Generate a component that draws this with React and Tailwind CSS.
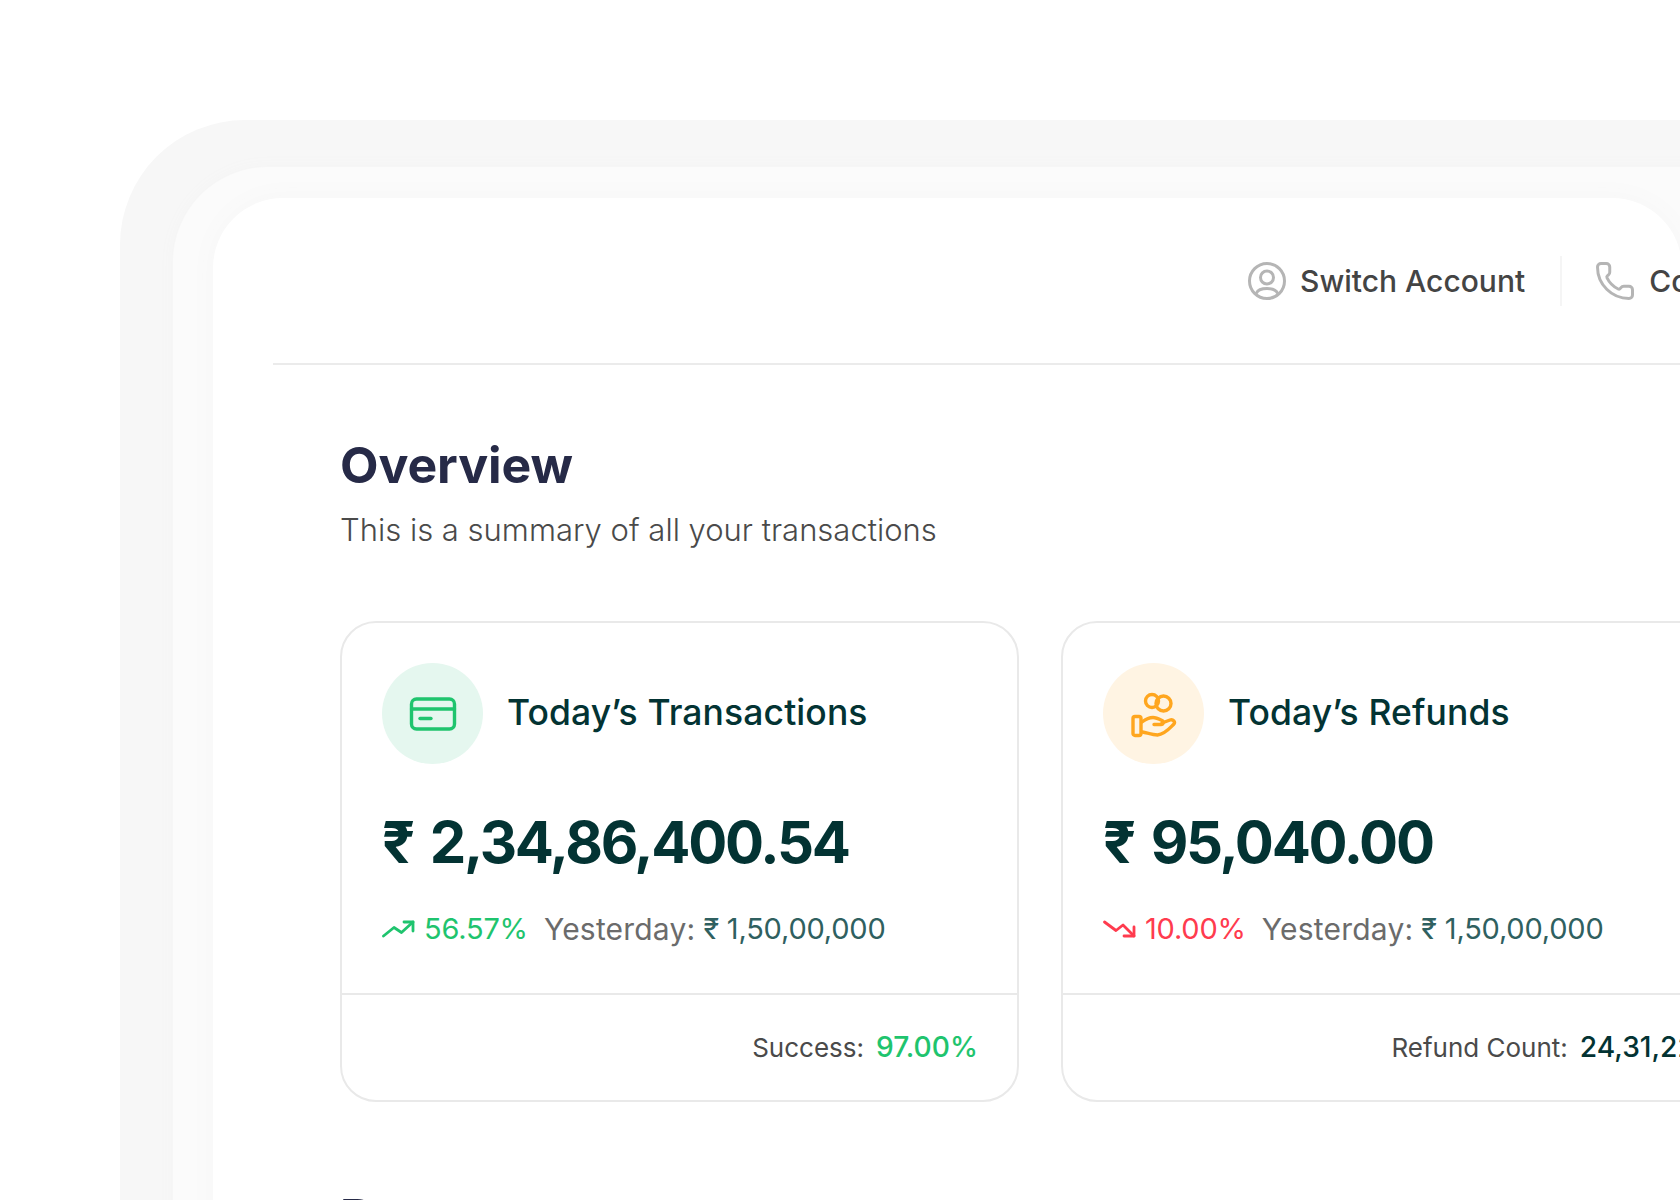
import { Phone } from "lucide-react";

const UserIcon = () => (
  <svg width="40" height="40" viewBox="0 0 40 40" fill="none" stroke="#b5b5b5" strokeWidth="3" strokeLinecap="round" className="shrink-0">
    <circle cx="20" cy="20" r="17.5" />
    <circle cx="20" cy="16.5" r="6.5" />
    <path d="M9.5 32c1.5-3.5 5.5-4.5 10.5-4.500s9 1 10.500 4.500" />
  </svg>
);

const CardIcon = () => (
  <svg width="48" height="36" viewBox="0 0 48 36" fill="none" stroke="#1fc46e" strokeWidth="3.4" strokeLinecap="round">
    <rect x="2.500" y="3" width="43" height="30" rx="5" />
    <path d="M2.500 13h43" />
    <path d="M11 22.500h11" />
  </svg>
);

const HandCoinsIcon = () => (
  <svg width="50" height="50" viewBox="0 0 50 50" fill="none" stroke="#ffa61f" strokeWidth="3.4" strokeLinecap="round" strokeLinejoin="round">
    <circle cx="23" cy="12" r="6.500" />
    <circle cx="34.500" cy="14.500" r="7.500" />
    <rect x="4" y="27.500" width="8" height="19" rx="2" />
    <path d="M13 33c4-3 7-4.500 11-4.500 3 0 6 1.500 9 3 2 1.200 1.500 4-1 4h-7" />
    <path d="M33 34l8-3c3-1 6 2 3.500 4.500-4 4-9 10-16 10.500-5 0-10-2-15-3" />
  </svg>
);

const TrendUp = () => (
  <svg width="33" height="18" viewBox="0 0 33 18" fill="none" stroke="#1fc46e" strokeWidth="2.800" strokeLinecap="round" strokeLinejoin="round" className="shrink-0">
    <path d="M1.500 16 12 7.500l7.500 5L31 2" />
    <path d="M22 2h9v9" />
  </svg>
);

const TrendDown = () => (
  <svg width="33" height="18" viewBox="0 0 33 18" fill="none" stroke="#ff3b4e" strokeWidth="2.800" strokeLinecap="round" strokeLinejoin="round" className="shrink-0">
    <path d="M1.500 2 13 10.500 20 5l11 11" />
    <path d="M21 16h10V7" />
  </svg>
);

const StatCard = ({ width, icon, iconBg, title, amount, trend, percent, percentColor, footerLabel, footerValue, footerColor }) => (
  <div className={`shrink-0 rounded-[36px] border-2 border-[#e9e9e9] bg-white ${width}`}>
    <div className="px-[40px] pt-[40px] pb-[44px]">
      <div className="flex items-center gap-[24px]">
        <div className={`flex h-[101px] w-[101px] items-center justify-center rounded-full ${iconBg}`}>{icon}</div>
        <div className="pb-[2px] text-[35.5px] leading-[44px] font-medium tracking-[0.1px] text-[#033333]">{title}</div>
      </div>
      <div className="mt-[48px] text-[58px] leading-[60px] font-bold tracking-[-1.6px] whitespace-nowrap text-[#033333]">
        ₹ <span className="ml-[4px] tracking-[-2.3px]">{amount}</span>
      </div>
      <div className="mt-[37px] flex items-center leading-[40px] whitespace-nowrap">
        {trend}
        <span className={`ml-[9px] text-[29px] tracking-[-0.2px] ${percentColor}`}>{percent}</span>
        <span className="ml-[16px] text-[30px] tracking-[0.2px] text-[#6b6b6b]">Yesterday:</span>
        <span className="ml-[8px] text-[29px] tracking-[-0.2px] text-[#2f6060]">₹ 1,50,00,000</span>
      </div>
    </div>
    <div className="flex h-[107px] items-center justify-end gap-[12px] border-t-2 border-[#e9e9e9] pr-[39px] whitespace-nowrap">
      <span className="text-[26px] text-[#4a4a4a]">{footerLabel}</span>
      <span className={`text-[28.2px] font-medium ${footerColor}`}>{footerValue}</span>
    </div>
  </div>
);

export default function App() {
  return (
    <div className="h-[1200px] w-[1680px] overflow-hidden bg-white pt-[120px] pl-[120px] font-['Inter',sans-serif]">
      <div className="h-[1400px] w-[1700px] rounded-tl-[125px] bg-[#f7f7f7] pt-[47px] pl-[53px]">
        <div className="h-[1400px] w-[1600px] rounded-tl-[95px] bg-[#fbfbfb] pt-[31px] pl-[40px] shadow-[0_0_16px_#f4f4f4]">
          <div className="h-[1300px] w-[1469px] rounded-t-[70px] bg-white shadow-[0_0_26px_#f6f6f6]">
            <header className="ml-[60px] flex h-[167px] items-center border-b-2 border-[#ebebeb] pl-[974px] whitespace-nowrap">
              <UserIcon />
              <span className="ml-[13px] pt-[2px] text-[30px] font-medium text-[#444444]">Switch Account</span>
              <div className="ml-[35px] h-[50px] w-[2px] shrink-0 bg-[#f5f5f5]" />
              <Phone size={42} strokeWidth={1.7} color="#b5b5b5" className="ml-[32px] shrink-0" />
              <span className="ml-[13px] pt-[2px] text-[30px] font-medium text-[#444444]">Contact Us</span>
            </header>
            <main className="pl-[127px]">
              <h1 className="mt-[71px] text-[50px] leading-[58px] font-bold tracking-[-0.1px] text-[#262a47]">Overview</h1>
              <p className="mt-[16px] text-[31px] leading-[40px] font-light text-[#4a4a4a]">This is a summary of all your transactions</p>
              <div className="mt-[71px] flex gap-[42px]">
                <StatCard
                  width="w-[679px]"
                  icon={<CardIcon />}
                  iconBg="bg-[#e5f7ef]"
                  title="Today’s Transactions"
                  amount="2,34,86,400.54"
                  trend={<TrendUp />}
                  percent="56.57%"
                  percentColor="text-[#1fc46e]"
                  footerLabel="Success:"
                  footerValue="97.00%"
                  footerColor="text-[#1fc46e]"
                />
                <StatCard
                  width="w-[693px]"
                  icon={<HandCoinsIcon />}
                  iconBg="bg-[#fff4e3]"
                  title="Today’s Refunds"
                  amount="95,040.00"
                  trend={<TrendDown />}
                  percent="10.00%"
                  percentColor="text-[#ff3b4e]"
                  footerLabel="Refund Count:"
                  footerValue="24,31,220"
                  footerColor="text-[#033333]"
                />
              </div>
              <h2 className="mt-[86px] text-[50px] leading-[58px] font-bold text-[#262a47]">Reports</h2>
            </main>
          </div>
        </div>
      </div>
    </div>
  );
}
